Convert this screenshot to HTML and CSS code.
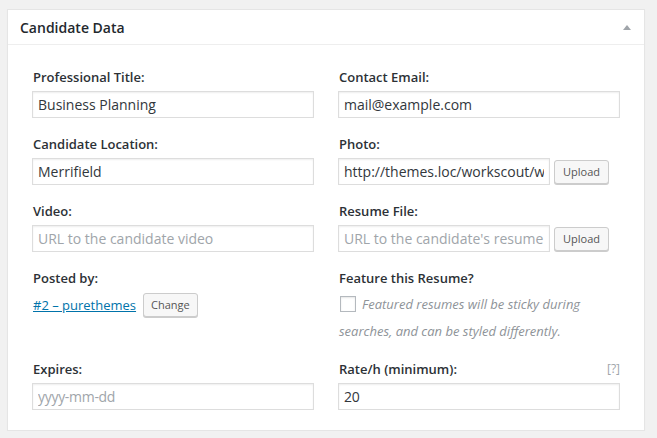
FILE: index.html
```html
<!DOCTYPE html>
<html>
<head>
<meta charset="utf-8">
<link rel="stylesheet" href="styles.css">
</head>
<body>
<div class="postbox">
  <div class="postbox-header">
    <h2 class="postbox-title">Candidate Data</h2>
    <span class="toggle-arrow"></span>
  </div>
  <div class="inside">
    <div class="field">
      <label class="field-label">Professional Title:</label>
      <input class="text-input" type="text" value="Business Planning">
    </div>
    <div class="field">
      <label class="field-label">Contact Email:</label>
      <input class="text-input" type="text" value="mail@example.com">
    </div>
    <div class="field">
      <label class="field-label">Candidate Location:</label>
      <input class="text-input" type="text" value="Merrifield">
    </div>
    <div class="field">
      <label class="field-label">Photo:</label>
      <div class="upload-row">
        <input class="text-input upload-input" type="text" value="http://themes.loc/workscout/wp-content/uploads/photo.jpg">
        <button class="small-button">Upload</button>
      </div>
    </div>
    <div class="field">
      <label class="field-label">Video:</label>
      <input class="text-input" type="text" placeholder="URL to the candidate video">
    </div>
    <div class="field">
      <label class="field-label">Resume File:</label>
      <div class="upload-row">
        <input class="text-input upload-input" type="text" placeholder="URL to the candidate's resume file">
        <button class="small-button">Upload</button>
      </div>
    </div>
    <div class="field">
      <label class="field-label">Posted by:</label>
      <div class="author-row">
        <a class="author-link" href="#">#2 – purethemes</a>
        <button class="small-button">Change</button>
      </div>
    </div>
    <div class="field">
      <label class="field-label">Feature this Resume?</label>
      <p class="description"><span class="checkbox"></span>Featured resumes will be sticky during searches, and can be styled differently.</p>
    </div>
    <div class="field">
      <label class="field-label">Expires:</label>
      <input class="text-input narrow-font" type="text" placeholder="yyyy-mm-dd">
    </div>
    <div class="field">
      <div class="label-row">
        <label class="field-label">Rate/h (minimum):</label>
        <span class="tip">[?]</span>
      </div>
      <input class="text-input narrow-font" type="text" value="20">
    </div>
  </div>
</div>
</body>
</html>
```

FILE: styles.css
```css
html, body {
  margin: 0;
  padding: 0;
}
body {
  background: #f1f1f1;
  font-family: "Open Sans", "Noto Sans", sans-serif;
  color: #32373c;
  padding: 9px 0 0 7px;
}
.postbox {
  width: 638px;
  box-sizing: border-box;
  background: #fff;
  border: 1px solid #e5e5e5;
  box-shadow: 0 1px 1px rgba(0,0,0,0.04);
}
.postbox-header {
  height: 34px;
  border-bottom: 1px solid #eee;
  display: flex;
  align-items: center;
  justify-content: space-between;
  padding: 0 13px 0 12px;
}
.postbox-title {
  margin: 0;
  font-size: 14px;
  font-weight: 600;
  color: #23282d;
  line-height: 1.4;
  padding-top: 1px;
}
.toggle-arrow {
  width: 0;
  height: 0;
  border-left: 4px solid transparent;
  border-right: 4px solid transparent;
  border-bottom: 5px solid #a0a5aa;
  margin-top: 1px;
}
.inside {
  display: grid;
  grid-template-columns: 282px 282px;
  column-gap: 24px;
  row-gap: 16px;
  padding: 22px 23px 20px 24px;
}
.field {
  display: flex;
  flex-direction: column;
}
.field-label {
  font-size: 13px;
  font-weight: 600;
  line-height: 20px;
  color: #2c3136;
  padding-left: 1px;
}
.label-row {
  display: flex;
  justify-content: space-between;
  align-items: center;
}
.tip {
  font-size: 12px;
  color: #a0a5aa;
  line-height: 20px;
}
.text-input {
  margin: 4px 0 0 0;
  height: 27px;
  box-sizing: border-box;
  width: 282px;
  border: 1px solid #ddd;
  box-shadow: inset 0 1px 2px rgba(0,0,0,0.07);
  font-family: "Open Sans", "Noto Sans", sans-serif;
  font-size: 14px;
  color: #32373c;
  padding: 0 5px;
  background: #fff;
  outline: none;
}
.text-input::placeholder {
  color: #a0a5aa;
}
.narrow-font {
  letter-spacing: -0.3px;
}
.upload-row {
  display: flex;
  align-items: center;
  gap: 4px;
  margin-top: 4px;
}
.upload-row .text-input {
  margin: 0;
}
.upload-input {
  width: 212px;
  flex: none;
}
.small-button {
  height: 24px;
  box-sizing: border-box;
  padding: 0 8px;
  font-family: "Open Sans", "Noto Sans", sans-serif;
  font-size: 11px;
  line-height: 22px;
  color: #555;
  background: #f7f7f7;
  border: 1px solid #ccc;
  border-radius: 3px;
  box-shadow: 0 1px 0 #ccc;
  cursor: pointer;
}
.author-row {
  display: flex;
  align-items: center;
  gap: 7px;
  margin-top: 5px;
  padding-left: 1px;
}
.author-row .small-button {
  padding: 0 7px;
}
.author-link {
  font-size: 13px;
  color: #0073aa;
  text-decoration: underline;
}
.description {
  margin: 3px 0 -2px 0;
  font-size: 13px;
  font-style: italic;
  line-height: 27px;
  color: #8e9398;
  padding-left: 1px;
}
.checkbox {
  display: inline-block;
  width: 16px;
  height: 16px;
  box-sizing: border-box;
  border: 1px solid #b4b9be;
  background: #fff;
  box-shadow: inset 0 1px 2px rgba(0,0,0,0.1);
  vertical-align: -3px;
  margin: 0 6px 0 1px;
}
```
